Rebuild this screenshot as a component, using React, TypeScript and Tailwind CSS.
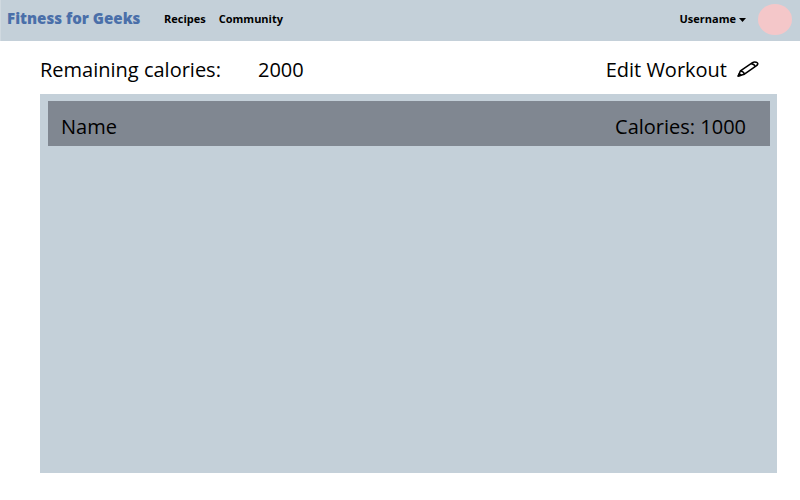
export default function App() {
  return (
    <div className="flex h-[500px] w-[800px] flex-col overflow-hidden bg-white font-['Open_Sans',sans-serif] text-black">
      <header className="flex h-[41px] shrink-0 items-center border-l border-[#d0d9e0] bg-[#c4d0d9] pb-[3px] pl-1.5 pr-2">
        <span className="w-[157px] -translate-y-px whitespace-nowrap text-[15.1px] font-extrabold text-[#4a6fa9]">Fitness for Geeks</span>
        <nav className="flex gap-[13px] text-[11px] font-bold">
          <span>Recipes</span>
          <span>Community</span>
        </nav>
        <div className="ml-auto flex items-center text-[11px] font-bold">
          <span>Username</span>
          <svg className="ml-[3px] mt-0.5" width="7" height="4" viewBox="0 0 7 4"><path d="M0 0h7L3.5 4z" /></svg>
          <span className="ml-3 h-[31px] w-[34px] rounded-[50%] bg-[#f4c7c9]" />
        </div>
      </header>
      <main className="pl-10 pr-[23px]">
        <div className="flex h-[53px] items-center pr-[18px] pt-1 text-[20px]">
          <span className="w-[218px]">Remaining calories:</span>
          <span>2000</span>
          <span className="ml-auto">Edit Workout</span>
          <svg className="mb-px ml-2.5" width="22" height="16" viewBox="0 0 22 16" fill="none" stroke="black" strokeWidth="1.5" strokeLinejoin="round">
            <path d="M1.2 15L3.4 9.9L15.5 1.7C17.4 .4 21.8 1.4 20.6 3.4Q20.3 4.1 19.2 4.9L7.4 13.2Z" />
            <path d="M3.4 9.9Q6.7 10.2 7.4 13.2M14.2 2.7Q17.5 3 18.1 5.6" />
            <path d="M1.2 15l1-2.3 1.8 1.5z" fill="black" />
          </svg>
        </div>
        <section className="h-[379px] bg-[#c4d0d9] pl-2 pr-[7px] pt-[7px]">
          <div className="flex h-[45px] items-center justify-between bg-[#808791] pl-[13px] pr-6 pt-1.5 text-[20px]">
            <span>Name</span>
            <span>Calories: 1000</span>
          </div>
        </section>
      </main>
    </div>
  );
}
